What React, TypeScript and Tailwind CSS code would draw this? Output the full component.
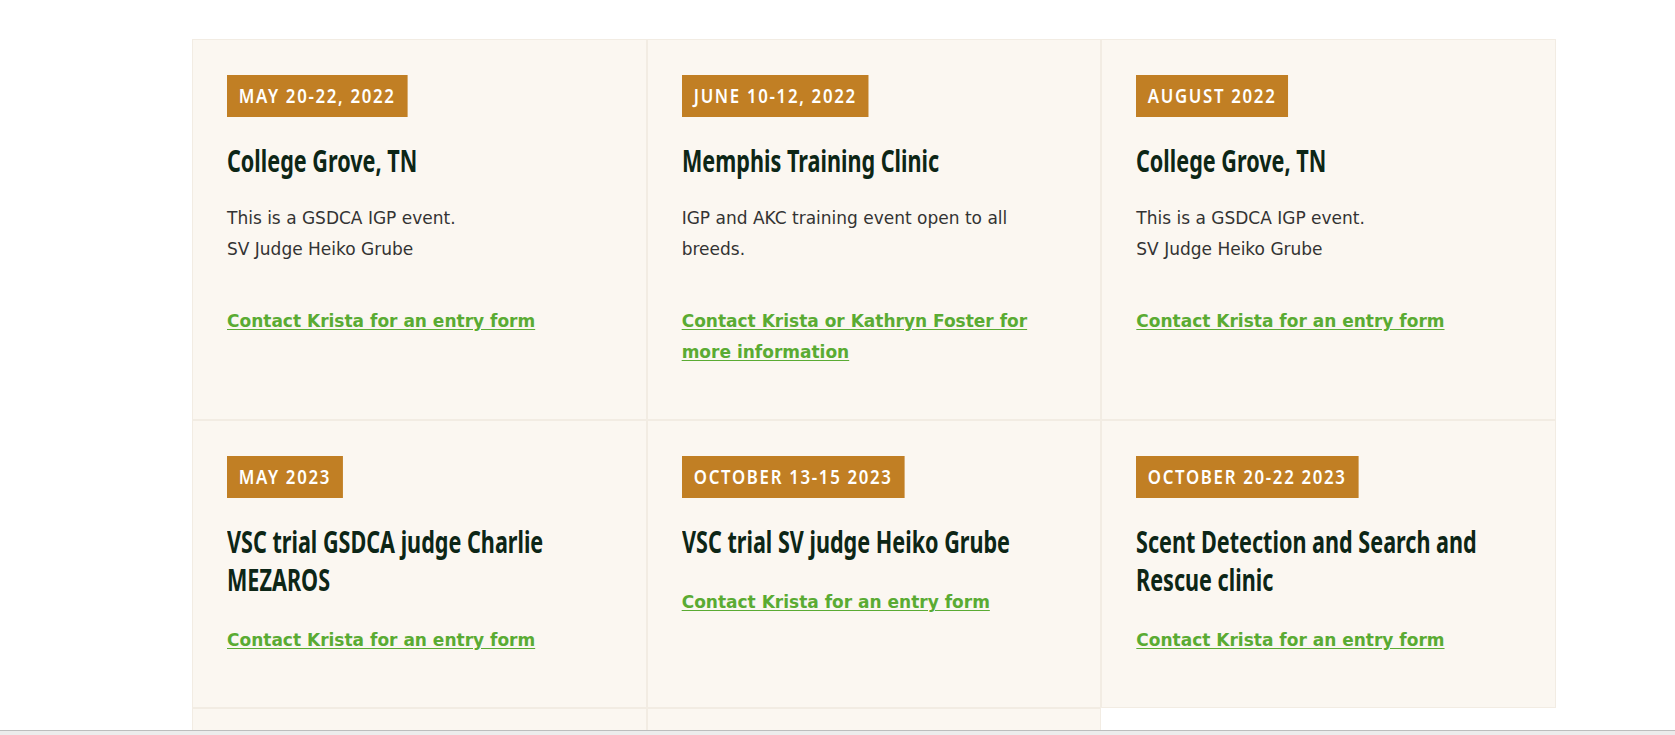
import React from "react";

type EventItem = {
  date: string;
  title: string;
  body?: string[];
  link: string;
};

const events: EventItem[] = [
  {
    date: "May 20-22, 2022",
    title: "College Grove, TN",
    body: ["This is a GSDCA IGP event.", "SV Judge Heiko Grube"],
    link: "Contact Krista for an entry form",
  },
  {
    date: "June 10-12, 2022",
    title: "Memphis Training Clinic",
    body: ["IGP and AKC training event open to all breeds."],
    link: "Contact Krista or Kathryn Foster for more information",
  },
  {
    date: "August 2022",
    title: "College Grove, TN",
    body: ["This is a GSDCA IGP event.", "SV Judge Heiko Grube"],
    link: "Contact Krista for an entry form",
  },
  {
    date: "May 2023",
    title: "VSC trial GSDCA judge Charlie MEZAROS",
    link: "Contact Krista for an entry form",
  },
  {
    date: "October 13-15 2023",
    title: "VSC trial SV judge Heiko Grube",
    link: "Contact Krista for an entry form",
  },
  {
    date: "October 20-22 2023",
    title: "Scent Detection and Search and Rescue clinic",
    link: "Contact Krista for an entry form",
  },
];

// Oswald isn't available offline, so Noto Sans is squeezed horizontally to get
// the same condensed look (layout width is widened by the inverse so wrapping matches)
const condensed = "font-['Noto_Sans',sans-serif] origin-left";

function EventCard({ item }: { item: EventItem }) {
  return (
    <div className="flex flex-col items-start border border-[#f2ece3] bg-[#fbf7f1] px-[34px] pt-[35px] pb-[51px]">
      {/* Date badge */}
      <span
        className={`${condensed} scale-x-[0.84] bg-[#c17f24] px-[14px] text-[20px] font-semibold uppercase leading-[42px] tracking-[0.1em] text-white`}
      >
        {item.date}
      </span>

      <h3
        className={`${condensed} mt-[25px] w-[139%] scale-x-[0.72] text-[30px] font-bold leading-[38px] text-[#0d2616]`}
      >
        {item.title}
      </h3>

      {item.body && (
        <div className="mt-[23px] font-['DejaVu_Sans',sans-serif] text-[17px] leading-[31px] text-[#333333]">
          {item.body.map((line) => (
            <p key={line}>{line}</p>
          ))}
        </div>
      )}

      <a
        href="#"
        className={`${item.body ? "mt-[41px]" : "mt-[26px]"} font-['DejaVu_Sans',sans-serif] text-[17px] font-bold leading-[31px] text-[#5aab33] underline underline-offset-2`}
      >
        {item.link}
      </a>
    </div>
  );
}

export default function App() {
  return (
    <div className="h-screen overflow-hidden bg-white">
      <div className="ml-[192px] mt-[39px] grid w-[1364px] grid-cols-3">
        {events.map((e, i) => (
          <EventCard key={i} item={e} />
        ))}
        {/* next row, cut off by the window */}
        <div className="h-[200px] border border-[#f2ece3] bg-[#fbf7f1]" />
        <div className="h-[200px] border border-[#f2ece3] bg-[#fbf7f1]" />
      </div>

      {/* browser scrollbar strip */}
      <div className="fixed bottom-0 left-0 h-[5px] w-full border-t border-[#bdbdbd] bg-[#ececec]" />
    </div>
  );
}
